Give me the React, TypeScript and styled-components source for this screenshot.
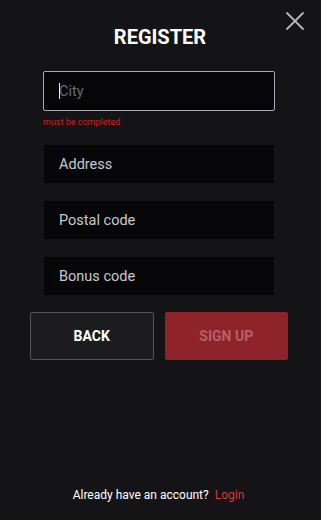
import React from 'react';
import styled, { createGlobalStyle } from 'styled-components';

const GlobalStyle = createGlobalStyle`
  html, body {
    margin: 0;
    padding: 0;
    background: #141416;
  }
  body {
    font-family: Roboto, "Liberation Sans", Arial, sans-serif;
  }
`;

const fields = [
  { name: 'address', placeholder: 'Address' },
  { name: 'postal', placeholder: 'Postal code' },
  { name: 'bonus', placeholder: 'Bonus code' },
];

function App() {
  return (
    <>
      <GlobalStyle />
      <Page>
        <CloseButton aria-label="close">
          <svg width="20" height="20" viewBox="0 0 20 20">
            <path d="M2 2 L18 18 M18 2 L2 18" stroke="#b4b6bc" strokeWidth="1.8" strokeLinecap="round" />
          </svg>
        </CloseButton>
        <Title>REGISTER</Title>
        <Form>
          <Field>
            <InputWrap>
              <Input placeholder="City" $invalid />
              <Caret />
            </InputWrap>
            <ErrorText>must be completed</ErrorText>
          </Field>
          {fields.map((f) => (
            <Field key={f.name}>
              <Input placeholder={f.placeholder} />
            </Field>
          ))}
          <Buttons>
            <Button type="button">BACK</Button>
            <Button type="button" $primary>
              SIGN UP
            </Button>
          </Buttons>
        </Form>
        <Footer>
          Already have an account?<LoginLink href="#">Login</LoginLink>
        </Footer>
      </Page>
    </>
  );
}

export default App;

const Page = styled.div`
  position: relative;
  width: 321px;
  height: 520px;
  display: flex;
  flex-direction: column;
  align-items: center;
  box-sizing: border-box;
  padding-top: 26px;
`;

const CloseButton = styled.button`
  position: absolute;
  top: 11px;
  right: 16px;
  width: 20px;
  height: 20px;
  padding: 0;
  border: 0;
  background: none;
  cursor: pointer;
`;

const Title = styled.h1`
  margin: 0 0 0 -1px;
  font-size: 20px;
  font-weight: 700;
  line-height: 22px;
  color: #ffffff;
`;

const Form = styled.form`
  width: 258px;
  margin: 23px 0 0 -3px;
  display: flex;
  flex-direction: column;
`;

const Field = styled.div`
  display: flex;
  flex-direction: column;
  padding: 0 13px;
  margin-bottom: 16px;
`;

const InputWrap = styled.div`
  position: relative;
  display: flex;
  flex-direction: column;
`;

const Caret = styled.span`
  position: absolute;
  left: 16px;
  top: 12px;
  width: 1px;
  height: 16px;
  background: #e8e8e8;
`;

const Input = styled.input<{ $invalid?: boolean }>`
  height: 40px;
  box-sizing: border-box;
  border: 1px solid ${({ $invalid }) => ($invalid ? '#a7a9b3' : 'transparent')};
  border-radius: 2px;
  background: #060608;
  background-clip: padding-box;
  padding: 0 15px;
  font-family: Roboto, "Liberation Sans", Arial, sans-serif;
  font-size: 14.5px;
  color: #e0e0e0;
  caret-color: #ffffff;
  outline: none;

  &::placeholder {
    color: ${({ $invalid }) => ($invalid ? '#6a6a70' : '#c8c8cc')};
  }
`;

const ErrorText = styled.span`
  margin-top: 6px;
  margin-bottom: 0;
  font-size: 9px;
  line-height: 11px;
  color: #d21f1f;
`;

const Buttons = styled.div`
  display: grid;
  grid-template-columns: 1fr 1fr;
  gap: 11px;
`;

const Button = styled.button<{ $primary?: boolean }>`
  height: 48px;
  border: 1px solid ${({ $primary }) => ($primary ? '#8e2329' : '#56565a')};
  border-radius: 2px;
  background: ${({ $primary }) => ($primary ? '#8e2329' : '#1c1c1f')};
  color: ${({ $primary }) => ($primary ? '#b76168' : '#ffffff')};
  font-family: Roboto, "Liberation Sans", Arial, sans-serif;
  font-size: 14px;
  font-weight: 700;
  cursor: pointer;
`;

const Footer = styled.div`
  margin-top: auto;
  margin-bottom: 18px;
  margin-left: -4px;
  font-size: 12px;
  color: #ffffff;
`;

const LoginLink = styled.a`
  margin-left: 6px;
  color: #d8373a;
  text-decoration: none;
`;
